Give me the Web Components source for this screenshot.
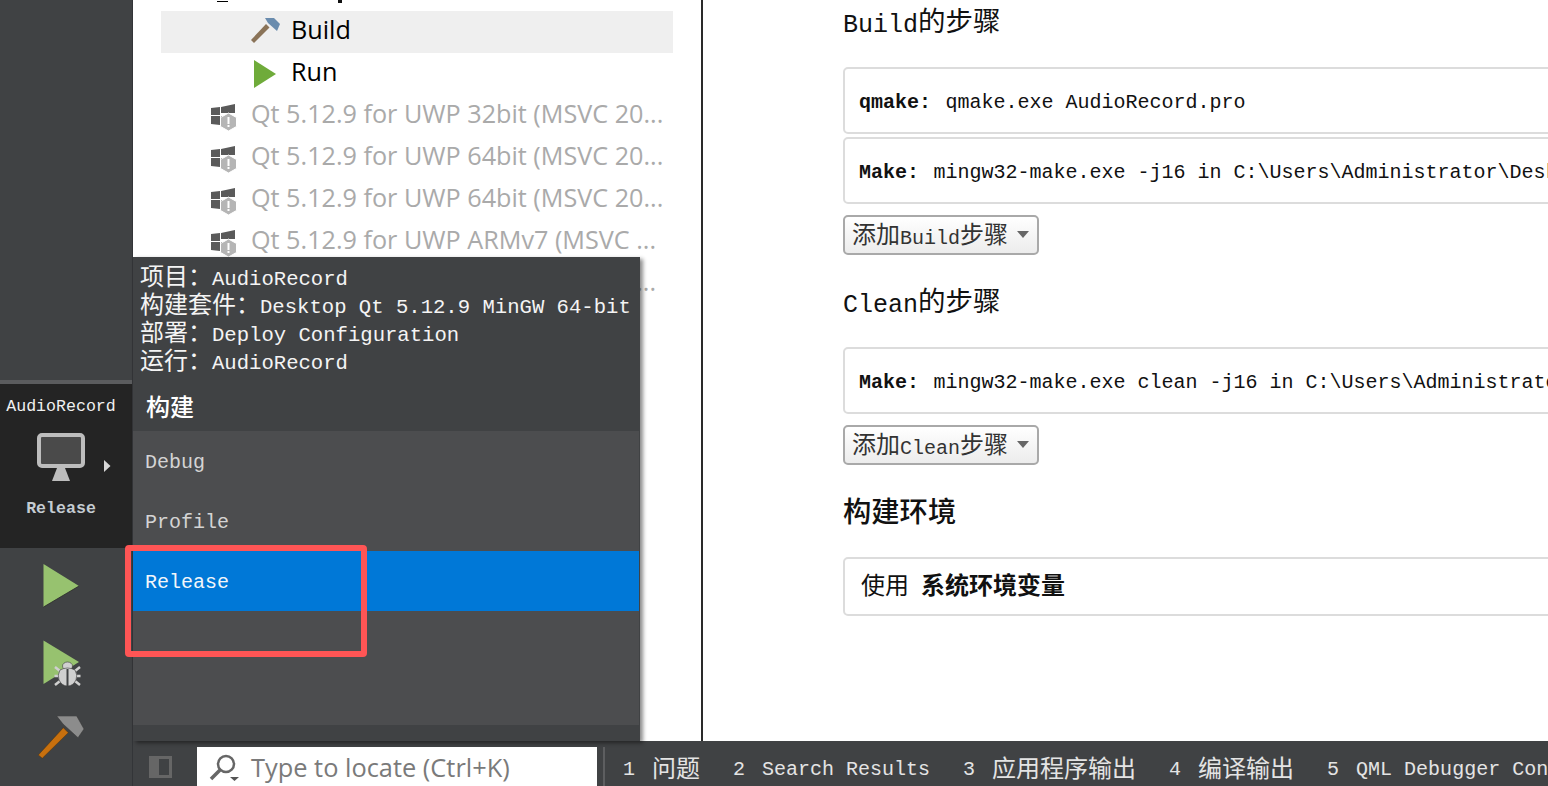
<!DOCTYPE html>
<html lang="zh"><head><meta charset="utf-8"><title>Qt Creator</title>
<style>
html,body{margin:0;padding:0;width:100%;height:100%;overflow:hidden;background:#fff}
</style></head><body>
<qt-app>
  <qt-sidebar slot="side"></qt-sidebar>
  <kit-tree slot="tree">
    <tree-row kind="clip"></tree-row>
    <tree-row kind="build" active>Build</tree-row>
    <tree-row kind="run">Run</tree-row>
    <tree-row kind="kit">Qt 5.12.9 for UWP 32bit (MSVC 20...</tree-row>
    <tree-row kind="kit">Qt 5.12.9 for UWP 64bit (MSVC 20...</tree-row>
    <tree-row kind="kit">Qt 5.12.9 for UWP 64bit (MSVC 20...</tree-row>
    <tree-row kind="kit">Qt 5.12.9 for UWP ARMv7 (MSVC ...</tree-row>
    <tree-row kind="kit">Qt 5.12.9 for UWP ARMv7 (MSVC ...</tree-row>
  </kit-tree>
  <build-settings slot="main"></build-settings>
  <status-bar slot="status"></status-bar>
  <kit-popup slot="over"></kit-popup>
  <red-mark slot="over"></red-mark>
</qt-app>
<script>
const MONO='"Liberation Mono","Noto Sans CJK SC",monospace';
const UI='"Open Sans","Noto Sans","Noto Sans CJK SC",sans-serif';
function def(name,html,init){
  const t=document.createElement('template');t.innerHTML=html;
  customElements.define(name,class extends HTMLElement{
    constructor(){super();this.attachShadow({mode:'open'}).appendChild(t.content.cloneNode(true));}
    connectedCallback(){if(init)init(this);}
  });
}
def('cjk-t',`<style>:host{display:inline;font-family:"Noto Sans CJK SC",sans-serif;font-size:var(--cjk,24px);letter-spacing:0;vertical-align:var(--r,1px);line-height:1}</style><slot></slot>`);

def('qt-app',`<style>
:host{display:block;position:relative;width:1548px;height:786px;overflow:hidden;font-family:${MONO}}
.g{display:grid;grid-template-columns:133px 570px 1fr;grid-template-rows:741px 45px;width:100%;height:100%}
.s{grid-row:1/3;display:flex}.t{display:flex;min-width:0}.m{display:flex;min-width:0;overflow:hidden}.b{grid-column:2/4;display:flex;min-width:0}
</style><div class="g"><div class="s"><slot name="side"></slot></div><div class="t"><slot name="tree"></slot></div><div class="m"><slot name="main"></slot></div><div class="b"><slot name="status"></slot></div></div><slot name="over"></slot>`);

def('qt-sidebar',`<style>
:host{display:flex;flex-direction:column;width:133px;background:#404244;border-right:1px solid #333538;box-sizing:border-box}
.sp{height:380px;flex:none;background:#404244}
.ln{height:4px;background:#5b5c5e;flex:none}
.kit{height:164px;flex:none;background:#242424;display:flex;flex-direction:column;align-items:center;color:#e8e8e8;position:relative;padding-right:10px}
.name{font-size:16.6px;line-height:20px;margin-top:13px;color:#f0f0f0;white-space:nowrap}
.mon{margin-top:16px;display:flex;height:48px}
.rel{font-size:16.6px;line-height:20px;margin-top:18px;color:#c4ccd2;font-weight:700}
.arr{position:absolute;left:104px;top:76px}
.act{display:flex;flex-direction:column;align-items:flex-start}
.act svg{display:block}
</style>
<div class="sp"></div><div class="ln"></div>
<div class="kit"><div class="name">AudioRecord</div>
<div class="mon"><svg width="48" height="48" viewBox="0 0 48 48"><rect x="2" y="2" width="44" height="31" rx="3" fill="#4a4a4a" stroke="#bdbdbd" stroke-width="4"/><path d="M20 35h8l5 13H15z" fill="#bdbdbd"/></svg></div>
<div class="rel">Release</div>
<svg class="arr" width="7" height="12" viewBox="0 0 7 12"><path d="M0 0l6.500 6L0 12z" fill="#d8d8d8"/></svg></div>
<div class="act">
<svg style="margin:15px 0 0 43px" width="37" height="45" viewBox="0 0 37 45"><path d="M0.500 1L36 23 0.500 44z" fill="#97c26f"/><path d="M0.500 44L36 23" stroke="#2a2a2a" stroke-width=".8" fill="none"/></svg>
<svg style="margin:32px 0 0 43px" width="40" height="47" viewBox="0 0 40 47"><path d="M0.500 0.500L36 22 0.500 44z" fill="#97c26f"/><path d="M17 31l-5-4M32 31l5-4M16 36h-4.500M33 36h4.500M17 41l-5 4M32 41l5 4" stroke="#d0d0d0" stroke-width="2.500"/><g fill="#d0d0d0" stroke="#3a3a3a" stroke-width=".6"><ellipse cx="24.500" cy="26" rx="5" ry="4"/><path d="M17 30q7.500-4 15 0q3 5 1 10q-3 6-8.500 6t-8.500-6q-2-5 1-10z"/></g><path d="M24.500 29v17" stroke="#404244" stroke-width="2"/></svg>
<svg style="margin:29px 0 0 38px" width="47" height="43" viewBox="0 0 47 43"><path d="M0.300 39L25.300 11.700 30.300 16.700 4.300 42.300z" fill="#c8700e" stroke="#4a3212" stroke-width=".5"/><path d="M18.700 0H38.700L46 13 40 21.700 25 8z" fill="#8c8c8c" stroke="#333" stroke-width=".5"/></svg>
</div>`);

def('kit-tree',`<style>:host{display:flex;flex-direction:column;width:570px;height:741px;box-sizing:border-box;border-right:2px solid #2a2a2a;background:#fff;overflow:hidden;font-family:${UI};padding:0 28px}</style><slot></slot>`);

const ICONS={
 build:`<svg width="30" height="27" viewBox="0 0 30 27"><path d="M0 23L15 7l3.500 3.500L3 26z" fill="#8a7358"/><path d="M14 1h9l6 6-3 7-9-8z" fill="#6a8cae"/></svg>`,
 run:`<svg width="24" height="28" viewBox="0 0 24 28"><path d="M1 0L23 14 1 28z" fill="#6fab3a"/></svg>`,
 kit:`<svg width="27" height="28" viewBox="0 0 27 28"><path d="M1 5L10 4V12H1zM11 4L25 1V10H11zM1 13H10V22L1 21zM11 13h3v10l-3-1z" fill="#5a5a5a"/><path d="M18.500 10l8 4.500v9l-8 4.500-8-4.500v-9z" fill="#b5b5b5" stroke="#fff" stroke-width="1"/><path d="M17.500 14h2v7h-2zM17.500 22h2v2h-2z" fill="#fff"/></svg>`
};
def('tree-row',`<style>
:host{display:flex;align-items:center;height:42px;flex:none;font-size:25.2px;white-space:nowrap;color:#000}
:host([active]){background:#efefef}
:host([kind=clip]){height:11px;align-items:flex-start}
:host([kind=kit]){color:#aaa}
.i{flex:none;display:flex;align-items:center}
.x{padding-bottom:7px}
.m1{width:11px;height:1px;background:#000;margin-left:56px}
.m2{width:4px;height:3px;background:#111;margin-left:110px}
</style><span class="i"></span><span class="x"><slot></slot></span>`,el=>{
 const k=el.getAttribute('kind'),i=el.shadowRoot.querySelector('.i');
 if(k==='clip'){i.innerHTML='<span class="m1"></span><span class="m2"></span>';return;}
 i.innerHTML=ICONS[k];
 if(k==='kit'){i.style.margin='1px 14px 0 49px';}
 else if(k==='build'){i.style.margin='-3px 10px 0 90px';}
 else {i.style.margin='0 14px 0 92px';i.style.width='24px'}
});

def('sec-head',`<style>:host{display:block;height:30px;font-size:25px;line-height:30px;color:#111;--cjk:27.500px;white-space:nowrap}
:host([big]){--cjk:28.300px;font-weight:500}</style><slot></slot>`);
def('step-card',`<style>:host{display:flex;align-items:center;box-sizing:border-box;height:67px;width:780px;border:2px solid #dcdcdc;border-radius:5px;padding:4px 14px 0;font-size:20px;color:#111;white-space:nowrap;background:#fff}
:host([env]){height:59px;padding:0 14px 0 16px}
</style><span><slot></slot></span>`);
def('add-btn',`<style>:host{display:inline-flex;align-items:center;box-sizing:border-box;height:40px;width:196px;flex:none;border:2px solid #a9a9a9;border-radius:5px;padding:0 0 0 7px;font-size:20px;color:#333;background:linear-gradient(#fff,#ececec);white-space:nowrap;position:relative}
i{position:absolute;left:172px;top:14px;width:0;height:0;border:6px solid transparent;border-top:7px solid #666;border-bottom:0}</style><span><slot></slot></span><i></i>`);
def('build-settings',`<style>
:host{display:flex;flex-direction:column;align-items:flex-start;padding:6px 0 0 140px;box-sizing:border-box;width:845px;height:741px;background:#fff;overflow:hidden}
step-card+step-card{margin-top:3px}
add-btn{margin-top:11px}
.h2{margin-top:31px}.h3{margin-top:31px}
.c{margin-top:31px}
.c.e{margin-top:31px}
b{font-weight:700;margin-right:2.500px}
.v{margin-left:12px}
</style>
<sec-head>Build<cjk-t>的步骤</cjk-t></sec-head>
<step-card class="c"><b>qmake:</b>&nbsp;qmake.exe AudioRecord.pro</step-card>
<step-card><b>Make:</b>&nbsp;mingw32-make.exe -j16 in C:\\Users\\Administrator\\Desktop\\AudioRecord</step-card>
<add-btn><cjk-t>添加</cjk-t>Build<cjk-t>步骤</cjk-t></add-btn>
<sec-head class="h2">Clean<cjk-t>的步骤</cjk-t></sec-head>
<step-card class="c"><b>Make:</b>&nbsp;mingw32-make.exe clean -j16 in C:\\Users\\Administrator\\Desktop</step-card>
<add-btn><cjk-t>添加</cjk-t>Clean<cjk-t>步骤</cjk-t></add-btn>
<sec-head class="h3" big><cjk-t>构建环境</cjk-t></sec-head>
<step-card class="c e" env><cjk-t>使用</cjk-t><b class="v"><cjk-t>系统环境变量</cjk-t></b></step-card>`);

def('status-tab',`<style>:host{display:inline-flex;gap:17px;font-size:20px;line-height:24px;color:#e4e4e4;white-space:nowrap;align-items:center;flex:none}</style><span><slot name="n"></slot></span><span><slot></slot></span>`);
def('status-bar',`<style>
:host{display:flex;align-items:flex-end;width:1415px;height:45px;background:#404244;box-sizing:border-box;overflow:hidden;--r:2px}
.tg{flex:none;width:64px;height:39px;display:flex;align-items:center;padding-left:16px;box-sizing:border-box}
.box{flex:none;width:400px;height:39px;background:#fff;display:flex;align-items:center;font-family:${UI};font-size:25.4px;color:#7a7a7a;white-space:nowrap}
.box svg{margin:0 11px 0 12px;flex:none}
.sep{flex:none;width:2px;height:39px;background:#5d5e60;margin:0 18px 0 6px}
.tabs{display:flex;gap:33px;height:39px;align-items:center;padding-top:7px;box-sizing:border-box}
</style>
<div class="tg"><svg width="23" height="22" viewBox="0 0 23 22"><path d="M0 0h23v22H0z" fill="#666"/><path d="M10 3h10v16H10z" fill="#404244"/></svg></div>
<div class="box"><svg width="31" height="28" viewBox="0 0 31 28"><circle cx="17" cy="11" r="8" fill="none" stroke="#666" stroke-width="2.500"/><path d="M11 17L2 26" stroke="#666" stroke-width="3.500"/><path d="M21 24h9l-4.500 4z" fill="#555"/></svg>Type to locate (Ctrl+K)</div>
<div class="sep"></div>
<div class="tabs">
<status-tab><span slot="n">1</span><cjk-t>问题</cjk-t></status-tab>
<status-tab><span slot="n">2</span>Search Results</status-tab>
<status-tab><span slot="n">3</span><cjk-t>应用程序输出</cjk-t></status-tab>
<status-tab><span slot="n">4</span><cjk-t>编译输出</cjk-t></status-tab>
<status-tab><span slot="n">5</span>QML Debugger Console</status-tab>
</div>`);

def('kit-popup',`<style>
:host{position:absolute;left:133px;top:257px;width:507px;height:484px;background:#404244;box-shadow:3px 2px 4px rgba(0,0,0,.45);color:#f4f4f4;font-size:20.600px;display:flex;flex-direction:column;white-space:nowrap;box-sizing:border-box}
.tip{padding:6px 0 0 7px;height:132px;box-sizing:border-box;flex:none;--r:0px}
.tip div{height:28px;line-height:28px}
.h{height:42px;box-sizing:border-box;padding-bottom:9px;flex:none;display:flex;align-items:center;padding-left:13px;color:#fff;font-weight:500;--cjk:24px}
.list{height:294px;flex:none;background:#4c4d4f;margin-right:1px;display:flex;flex-direction:column;color:#d4d4d4;font-size:20px}
.it{height:60px;box-sizing:border-box;padding-top:2px;flex:none;display:flex;align-items:center;padding-left:12px}
.sel{background:#0078d7;color:#f2f6fa}
</style>
<div class="tip"><div><cjk-t>项目：</cjk-t>AudioRecord</div><div><cjk-t>构建套件：</cjk-t>Desktop Qt 5.12.9 MinGW 64-bit</div><div><cjk-t>部署：</cjk-t>Deploy Configuration</div><div><cjk-t>运行：</cjk-t>AudioRecord</div></div>
<div class="h"><cjk-t>构建</cjk-t></div>
<div class="list"><div class="it">Debug</div><div class="it">Profile</div><div class="it sel">Release</div></div>`);

def('red-mark',`<style>:host{position:absolute;left:125px;top:545px;width:242px;height:112px;box-sizing:border-box;border:6px solid #ff5555;border-radius:4px;pointer-events:none}</style>`);
</script>
</body></html>
